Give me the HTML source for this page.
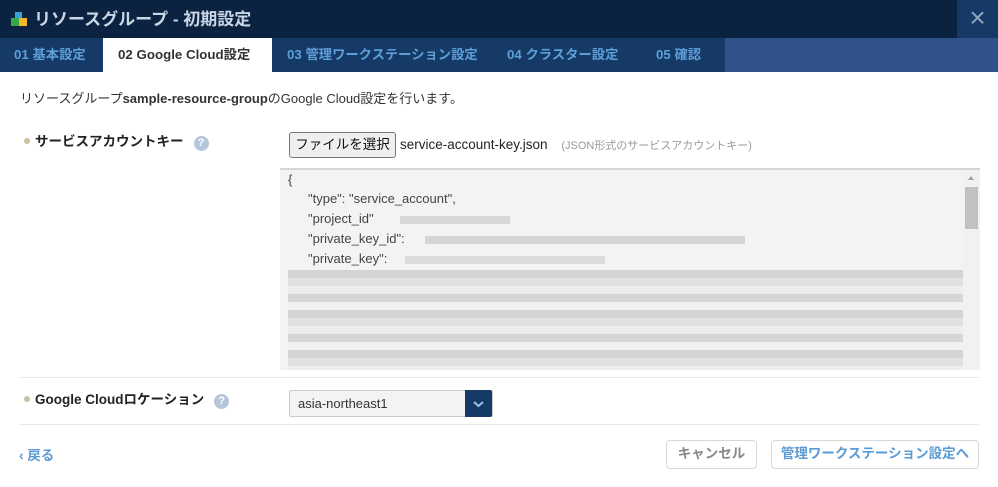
<!DOCTYPE html>
<html><head><meta charset="utf-8"><style>
*{margin:0;padding:0;box-sizing:border-box}
body{width:998px;height:487px;background:#fff;font-family:"Liberation Sans","Noto Sans CJK JP",sans-serif;color:#333;position:relative;overflow:hidden}
.hdr{position:absolute;left:0;top:0;width:998px;height:38px;background:#0b2340}
.hdr .t{position:absolute;left:34px;top:5px;font-size:17px;font-weight:bold;color:#c9d6e6}
.close{position:absolute;right:0;top:0;width:41px;height:38px;background:#163a66;color:#8ea3bd;font-size:28px;font-weight:300;text-align:center;line-height:36px}
.logo{position:absolute;left:11px;top:11px;width:16px;height:16px}
.tabs{position:absolute;top:38px;left:0;width:998px;height:34px;background:#30528a}
.tabs .d{position:absolute;left:0;top:0;width:725px;height:34px;background:#163a66}
.tab{position:absolute;top:0;height:34px;line-height:33px;font-size:13.3px;font-weight:bold;color:#5e9fda}
.tab.a{background:#fff;color:#333}
.intro{position:absolute;left:20px;top:88px;font-size:13px;color:#333}
.lbl{position:absolute;left:24px;font-size:13.5px;font-weight:bold;color:#222}
.dot{display:inline-block;width:6px;height:6px;border-radius:3px;background:#c8c0a0;margin-right:5px;vertical-align:2px}
.q{display:inline-block;width:15px;height:15px;border-radius:8px;background:#b5c6da;color:#fff;font-size:11px;text-align:center;line-height:15px;margin-left:10px;vertical-align:0px}
.btnf{position:absolute;left:289px;top:132px;width:107px;height:26px;border:1px solid #777;border-radius:3px;background:#efefef;font-size:13.5px;text-align:center;line-height:24px;color:#111}
.ta{position:absolute;left:280px;top:168px;width:700px;height:202px;background:#f3f3f3;border-top:2px solid #d6d6d6;overflow:hidden;font-size:13px;color:#444}
.ta .ln{position:absolute;left:8px;white-space:nowrap}
.bl{position:absolute;height:6px}
.sb{position:absolute;right:0;top:0;width:17px;height:200px;background:#f1f1f1}
hr.s{position:absolute;left:19px;width:960px;border:0;border-top:1px solid #e3e9f0}
.sel{position:absolute;left:289px;top:390px;width:204px;height:27px;border:1px solid #ccc;border-radius:2px;background:#f3f3f3;font-size:13px;line-height:25px;padding-left:8px;color:#333}
.sel .ar{position:absolute;right:0;top:-1px;width:27px;height:27px;background:#163a66;border-radius:0 2px 2px 0}
.btn{position:absolute;top:440px;height:29px;border:1px solid #d8d8d8;border-radius:4px;background:#fff;font-size:13.5px;font-weight:bold;text-align:center;line-height:26px}
</style></head><body>
<div class="hdr">
<svg class="logo" viewBox="0 0 16 16"><rect x="4" y="1" width="7" height="7" fill="#3aa0d8"/><rect x="0" y="7" width="8" height="8" fill="#36a84a"/><rect x="8" y="7" width="8" height="8" fill="#f0b82a"/></svg>
<div class="t">リソースグループ - 初期設定</div>
<div class="close">×</div>
</div>
<div class="tabs"><div class="d"></div>
<div class="tab" style="left:14px">01 基本設定</div>
<div class="tab a" style="left:103px;width:169px;padding-left:15px">02 Google Cloud設定</div>
<div class="tab" style="left:287px">03 管理ワークステーション設定</div>
<div class="tab" style="left:507px">04 クラスター設定</div>
<div class="tab" style="left:656px">05 確認</div>
</div>
<div class="intro">リソースグループ<b>sample-resource-group</b>のGoogle Cloud設定を行います。</div>
<div class="lbl" style="top:130px"><span class="dot"></span>サービスアカウントキー<span class="q">?</span></div>
<div class="btnf">ファイルを選択</div>
<div style="position:absolute;left:400px;top:137px;font-size:13.5px;color:#222">service-account-key.json <span style="font-size:11px;color:#999;margin-left:10px">(JSON形式のサービスアカウントキー)</span></div>
<div class="ta">
<div class="ln" style="top:2px">{</div>
<div class="ln" style="top:21px;left:28px">"type": "service_account",</div>
<div class="ln" style="top:41px;left:28px">"project_id"</div>
<div class="ln" style="top:61px;left:28px">"private_key_id":</div>
<div class="ln" style="top:81px;left:28px">"private_key":</div>
<div class="bl" style="left:120px;top:46px;width:110px;height:8px;background:#d8d8d8"></div>
<div class="bl" style="left:145px;top:66px;width:320px;height:8px;background:#d6d6d6"></div>
<div class="bl" style="left:125px;top:86px;width:200px;height:8px;background:#dcdcdc"></div>
<div style="position:absolute;left:8px;top:100px;width:690px;height:100px;background:repeating-linear-gradient(#d4d4d4 0 8px,#e0e0e0 8px 16px,#ececec 16px 24px,#d6d6d6 24px 32px,#f0f0f0 32px 40px)"></div>
<div class="sb"><div style="position:absolute;left:5px;top:6px;border:3.5px solid transparent;border-bottom:4px solid #a0a0a0;border-top:0"></div><div style="position:absolute;left:2px;top:17px;width:13px;height:42px;background:#c1c1c1"></div></div>
</div>
<hr class="s" style="top:377px">
<div class="lbl" style="top:388px"><span class="dot"></span>Google Cloudロケーション<span class="q">?</span></div>
<div class="sel">asia-northeast1<div class="ar"><svg width="27" height="27" viewBox="0 0 27 27"><path d="M9 12l4.5 4 4.5-4" stroke="#9fc0e6" stroke-width="2" fill="none"/></svg></div></div>
<hr class="s" style="top:424px">
<div style="position:absolute;left:19px;top:444px;font-size:13.5px;font-weight:bold;color:#5b9bd5">‹ 戻る</div>
<div class="btn" style="left:666px;width:91px;color:#888">キャンセル</div>
<div class="btn" style="left:771px;width:208px;color:#5b9bd5">管理ワークステーション設定へ</div>
</body></html>
